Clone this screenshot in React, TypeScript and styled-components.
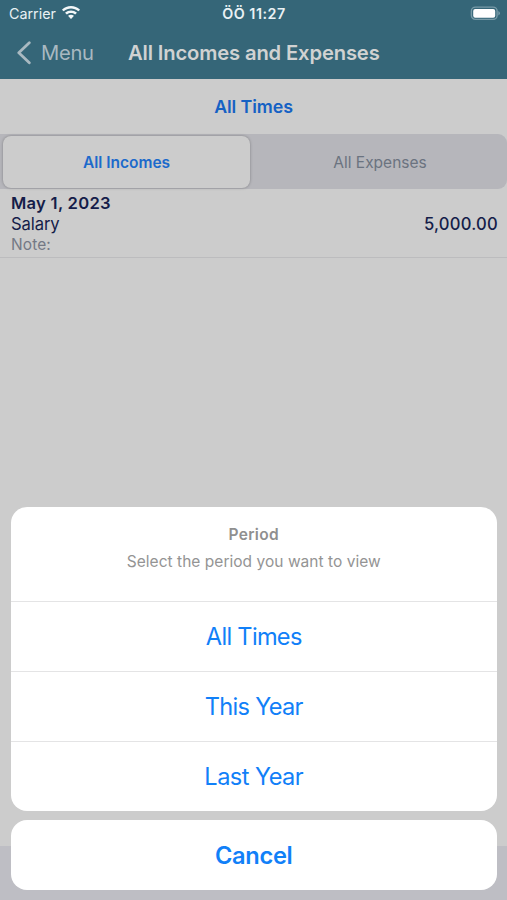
import React from 'react';
import styled, { createGlobalStyle } from 'styled-components';

const GlobalStyle = createGlobalStyle`
  * { box-sizing: border-box; }
  html, body { margin: 0; padding: 0; }
  body { font-family: Inter, "Liberation Sans", sans-serif; overflow: hidden; }
  button { font-family: inherit; border: 0; margin: 0; padding: 0; background: none; }
`;

const Screen = styled.div`
  position: relative;
  display: flex;
  flex-direction: column;
  width: 100%;
  height: 100vh;
  background: #cccccc;
  overflow: hidden;
`;

const Header = styled.header`
  height: 79px;
  flex: none;
  background: #356678;
`;

const StatusBar = styled.div`
  display: grid;
  grid-template-columns: 1fr auto 1fr;
  align-items: center;
  height: 27px;
  padding: 0 6px 0 9px;
  font-size: 14.3px;
  color: #e9f1f4;
`;

const Carrier = styled.div`
  display: flex;
  align-items: center;
  gap: 6px;
  letter-spacing: 0;
  svg { display: block; margin-top: -1px; }
`;

const Clock = styled.div`
  font-weight: 600;
  letter-spacing: 0.53px;
  margin-left: -2px;
`;

const Battery = styled.svg`
  justify-self: end;
  display: block;
`;

const NavBar = styled.nav`
  display: flex;
  align-items: center;
  height: 50px;
  padding-left: 17px;
`;

const BackButton = styled.button`
  display: flex;
  align-items: center;
  gap: 9px;
  width: 111px;
  font-size: 20.2px;
  letter-spacing: -0.31px;
  color: #a9b9c1;
  svg { display: block; margin-top: 1px; }
`;

const Title = styled.h1`
  margin: 0;
  font-size: 20.2px;
  font-weight: 600;
  letter-spacing: -0.14px;
  color: #d0d2d2;
  white-space: nowrap;
`;

const PeriodButton = styled.button`
  flex: none;
  height: 55px;
  font-size: 17.8px;
  font-weight: 600;
  letter-spacing: -0.08px;
  color: #1561c4;
`;

const Segments = styled.div`
  display: grid;
  grid-template-columns: 247px 1fr;
  flex: none;
  height: 55px;
  padding: 2px 2px 1px 3px;
  border-radius: 0 9px 9px 0;
  background: #b6b6bb;
`;

const Segment = styled.button<{ $selected?: boolean }>`
  border-radius: 8px;
  font-size: 15.5px;
  font-weight: ${(p) => (p.$selected ? 600 : 400)};
  color: ${(p) => (p.$selected ? '#1c6acb' : '#6b7380')};
  background: ${(p) => (p.$selected ? '#cccccc' : 'transparent')};
  box-shadow: ${(p) => (p.$selected ? '0 0 3px rgba(0, 0, 0, 0.3)' : 'none')};
  padding: ${(p) => (p.$selected ? '0' : '0 0 0 5px')};
`;

const Entry = styled.article`
  display: grid;
  grid-template-columns: 1fr auto;
  grid-template-rows: 22px 20px 20px;
  align-items: center;
  flex: none;
  height: 69px;
  padding: 3px 9px 0 11px;
  border-bottom: 1px solid #bcbcbe;
  font-size: 16.6px;
  color: #151d49;
`;

const EntryDate = styled.div`
  grid-column: 1 / -1;
  font-weight: 600;
  letter-spacing: 0.28px;
`;

const EntryName = styled.div`
  letter-spacing: -0.1px;
`;

const EntryAmount = styled.div`
  font-weight: 500;
  letter-spacing: 0.25px;
`;

const EntryNote = styled.div`
  grid-column: 1 / -1;
  font-size: 15.5px;
  letter-spacing: 0.1px;
  color: #747985;
`;

const TabBar = styled.footer`
  flex: none;
  height: 54px;
  margin-top: auto;
  background: #bebec4;
`;

const ActionSheet = styled.section`
  position: absolute;
  left: 10.5px;
  right: 10px;
  bottom: 10px;
  display: flex;
  flex-direction: column;
  gap: 9.5px;
`;

const SheetCard = styled.div`
  border-radius: 16px;
  background: #ffffff;
  overflow: hidden;
`;

const SheetHeader = styled.div`
  height: 94px;
  padding-top: 18px;
  text-align: center;
  font-size: 15.5px;
  line-height: 20px;
  color: #8f8f8f;
`;

const SheetTitle = styled.div`
  font-weight: 600;
  letter-spacing: 0.35px;
`;

const SheetMessage = styled.div`
  margin-top: 7px;
  letter-spacing: 0.03px;
  color: #949494;
`;

const SheetAction = styled.button<{ $tracking: number }>`
  display: block;
  width: 100%;
  height: 70px;
  border-top: 1px solid #e4e4e5;
  font-size: 23.6px;
  letter-spacing: ${(p) => p.$tracking}px;
  color: #1180f8;
`;

const CancelButton = styled(SheetAction)`
  border-top: 0;
  font-weight: 600;
`;

const periods = [
  { label: 'All Times', tracking: -0.7 },
  { label: 'This Year', tracking: -0.69 },
  { label: 'Last Year', tracking: -0.55 },
];

export default function App() {
  return (
    <Screen>
      <GlobalStyle />
      <Header>
        <StatusBar>
          <Carrier>
            Carrier
            <svg width="18" height="14" viewBox="0 0 18 14" fill="#f4f8f9">
              <path d="M9 0C5.6 0 2.4 1.3 0.2 3.4Q-.1 3.7.2 4L1.4 5.1Q1.7 5.4 2 5.1C3.8 3.4 6.3 2.5 9 2.5s5.2.9 7 2.6q.3.3.6 0L17.8 4q.3-.3 0-.6C15.6 1.3 12.4 0 9 0Z" />
              <path d="M9 4.4c-2.1 0-4.2.8-5.7 2.1q-.3.3 0 .6l1.3 1.2q.3.3.6 0C6.2 7.4 7.5 6.9 9 6.9s2.8.5 3.8 1.4q.3.3.6 0l1.3-1.2q.3-.3 0-.6C13.2 5.2 11.1 4.4 9 4.4Z" />
              <path d="M9 8.7c-1 0-1.9.3-2.6.9q-.3.3 0 .6l2.3 2.6q.3.3.6 0l2.3-2.6q.3-.3 0-.6C10.900 9 10 8.700 9 8.700Z" />
            </svg>
          </Carrier>
          <Clock>ÖÖ 11:27</Clock>
          <Battery width="31" height="15" viewBox="0 0 31 15">
            <rect x="1.400" y="1.100" width="25.700" height="12.300" rx="4" fill="none" stroke="#789ba8" strokeWidth="1.400" />
            <rect x="3.200" y="2.900" width="22" height="8.800" rx="2" fill="#ffffff" />
            <path d="M28.300 5v4.500Q30 8.600 30 7.250T28.300 5Z" fill="#789ba8" />
          </Battery>
        </StatusBar>
        <NavBar>
          <BackButton>
            <svg width="15" height="24" viewBox="0 0 15 24" fill="none" stroke="#a9b9c1" strokeWidth="2.800" strokeLinecap="round" strokeLinejoin="round">
              <path d="M12.300 1.700 1.800 11.700 12.300 21.700" />
            </svg>
            Menu
          </BackButton>
          <Title>All Incomes and Expenses</Title>
        </NavBar>
      </Header>
      <PeriodButton>All Times</PeriodButton>
      <Segments>
        <Segment $selected>All Incomes</Segment>
        <Segment>All Expenses</Segment>
      </Segments>
      <Entry>
        <EntryDate>May 1, 2023</EntryDate>
        <EntryName>Salary</EntryName>
        <EntryAmount>5,000.00</EntryAmount>
        <EntryNote>Note:</EntryNote>
      </Entry>
      <TabBar />
      <ActionSheet>
        <SheetCard>
          <SheetHeader>
            <SheetTitle>Period</SheetTitle>
            <SheetMessage>Select the period you want to view</SheetMessage>
          </SheetHeader>
          {periods.map((p) => (
            <SheetAction key={p.label} $tracking={p.tracking}>{p.label}</SheetAction>
          ))}
        </SheetCard>
        <SheetCard>
          <CancelButton $tracking={-0.3}>Cancel</CancelButton>
        </SheetCard>
      </ActionSheet>
    </Screen>
  );
}
